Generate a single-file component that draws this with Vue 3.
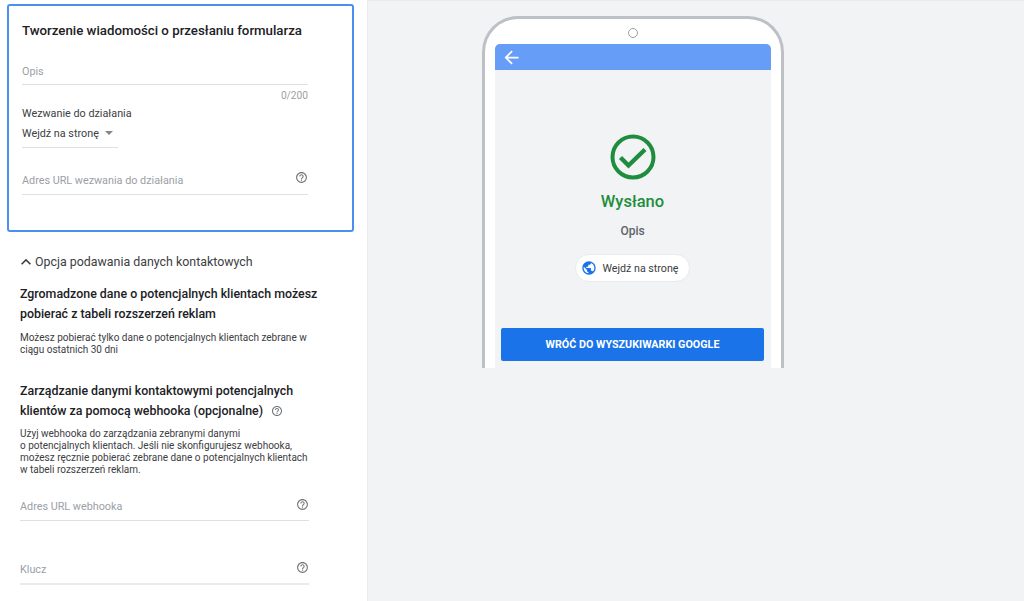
<script setup>
const helpPath = 'M11 18h2v-2h-2v2zm1-16C6.48 2 2 6.48 2 12s4.48 10 10 10 10-4.48 10-10S17.52 2 12 2zm0 18c-4.41 0-8-3.59-8-8s3.59-8 8-8 8 3.59 8 8-3.59 8-8 8zm0-14c-2.21 0-4 1.79-4 4h2c0-1.1.9-2 2-2s2 .9 2 2c0 2-3 1.75-3 5h2c0-2.25 3-2.5 3-5 0-2.21-1.79-4-4-4z'
</script>

<template>
  <div class="page">
    <aside class="panel">
      <section class="card">
        <h2 class="card-title">Tworzenie wiadomości o przesłaniu formularza</h2>
        <div class="field opis-field">
          <span class="placeholder">Opis</span>
        </div>
        <div class="counter">0/200</div>
        <div class="cta-label">Wezwanie do działania</div>
        <div class="select">
          <span>Wejdź na stronę</span>
          <i class="caret"></i>
        </div>
        <div class="field url-field">
          <span class="placeholder">Adres URL wezwania do działania</span>
          <svg class="help" viewBox="0 0 24 24"><path :d="helpPath" /></svg>
        </div>
      </section>

      <div class="contact">
        <div class="toggle">
          <svg class="chevron" viewBox="0 0 24 24"><path d="M7.41 15.41 12 10.83l4.59 4.58L18 14l-6-6-6 6z" /></svg>
          <span>Opcja podawania danych kontaktowych</span>
        </div>
        <h3 class="heading">Zgromadzone dane o potencjalnych klientach możesz<br />pobierać z tabeli rozszerzeń reklam</h3>
        <p class="note">Możesz pobierać tylko dane o potencjalnych klientach zebrane w<br />ciągu ostatnich 30 dni</p>
        <h3 class="heading second">
          Zarządzanie danymi kontaktowymi potencjalnych<br />
          klientów za pomocą webhooka (opcjonalne)
          <svg class="help inline" viewBox="0 0 24 24"><path :d="helpPath" /></svg>
        </h3>
        <p class="note">
          Użyj webhooka do zarządzania zebranymi danymi<br />
          o potencjalnych klientach. Jeśli nie skonfigurujesz webhooka,<br />
          możesz ręcznie pobierać zebrane dane o potencjalnych klientach<br />
          w tabeli rozszerzeń reklam.
        </p>
        <div class="field webhook-field">
          <span class="placeholder">Adres URL webhooka</span>
          <svg class="help" viewBox="0 0 24 24"><path :d="helpPath" /></svg>
        </div>
        <div class="field key-field">
          <span class="placeholder">Klucz</span>
          <svg class="help" viewBox="0 0 24 24"><path :d="helpPath" /></svg>
        </div>
      </div>
    </aside>

    <main class="preview">
      <div class="phone">
        <div class="camera"></div>
        <div class="screen">
          <div class="appbar">
            <svg class="back" viewBox="0 0 24 24"><path d="M20 11H7.83l5.59-5.59L12 4l-8 8 8 8 1.41-1.41L7.83 13H20v-2z" /></svg>
          </div>
          <div class="content">
            <svg class="check" viewBox="0 0 46 46">
              <circle cx="23" cy="23" r="20.5" fill="none" stroke="#1e8e3e" stroke-width="4" />
              <path d="M10.5 23.5 18.5 31.5 35 15.5" fill="none" stroke="#1e8e3e" stroke-width="4.4" />
            </svg>
            <div class="sent">Wysłano</div>
            <div class="desc">Opis</div>
            <div class="chip">
              <svg class="globe" viewBox="0 0 24 24"><path d="M12 2C6.48 2 2 6.48 2 12s4.48 10 10 10 10-4.48 10-10S17.52 2 12 2zm-1 17.93c-3.95-.49-7-3.85-7-7.93 0-.62.08-1.21.21-1.79L9 15v1c0 1.1.9 2 2 2v1.93zm6.9-2.54c-.26-.81-1-1.39-1.9-1.39h-1v-3c0-.55-.45-1-1-1H8v-2h2c.55 0 1-.45 1-1V7h2c1.1 0 2-.9 2-2v-.41c2.93 1.19 5 4.06 5 7.41 0 2.08-.8 3.97-2.1 5.39z" /></svg>
              <span>Wejdź na stronę</span>
            </div>
            <div class="return-btn">WRÓĆ DO WYSZUKIWARKI GOOGLE</div>
          </div>
        </div>
      </div>
    </main>
  </div>
</template>

<style>
html, body {
  margin: 0;
  height: 100%;
  overflow: hidden;
}
</style>

<style scoped>
.page {
  display: flex;
  width: 1024px;
  height: 601px;
  overflow: hidden;
  font-family: Roboto, "Liberation Sans", sans-serif;
  color: #202124;
  background: #f1f3f4;
}

.panel {
  flex: none;
  box-sizing: border-box;
  width: 368px;
  height: 601px;
  padding: 4px 0 0 7px;
  background: #fff;
  border-right: 1px solid #e8eaed;
}

.card {
  box-sizing: border-box;
  width: 347px;
  height: 228px;
  padding: 15px 44px 0 13px;
  border: 2px solid #4a90ec;
  border-radius: 3px;
}

.card-title {
  margin: 0;
  font-size: 13.25px;
  line-height: 20px;
  font-weight: 500;
  white-space: nowrap;
}

.field {
  position: relative;
  border-bottom: 1px solid #e0e0e0;
}

.placeholder {
  display: block;
  font-size: 10.8px;
  line-height: 16px;
  color: #9aa0a6;
}

.help {
  width: 13px;
  height: 13px;
  fill: #6f7377;
}

.field .help {
  position: absolute;
  right: 0;
  top: 0;
}

.opis-field {
  margin-top: 22px;
  height: 20px;
  padding-top: 1px;
}

.counter {
  margin-top: 5px;
  font-size: 10.2px;
  line-height: 12px;
  color: #9aa0a6;
  text-align: right;
}

.cta-label {
  margin-top: 4px;
  font-size: 10.8px;
  line-height: 16px;
  color: #3c4043;
}

.select {
  display: flex;
  align-items: center;
  gap: 6px;
  box-sizing: border-box;
  width: 96px;
  height: 24px;
  margin-top: 2px;
  padding-bottom: 5px;
  font-size: 10.8px;
  white-space: nowrap;
  border-bottom: 1px solid #e0e0e0;
  color: #3c4043;
}

.caret {
  width: 0;
  height: 0;
  border-left: 4px solid transparent;
  border-right: 4px solid transparent;
  border-top: 4px solid #80868b;
}

.url-field {
  margin-top: 24px;
  height: 21px;
  padding-top: 1px;
}

.url-field .help {
  top: -1px;
}

.contact {
  width: 300px;
  padding: 21px 0 0 13px;
}

.toggle {
  display: flex;
  align-items: center;
  gap: 0;
  height: 18px;
  margin-left: -4px;
  font-size: 12.4px;
  line-height: 18px;
  color: #3c4043;
  white-space: nowrap;
}

.chevron {
  flex: none;
  width: 20px;
  height: 20px;
  margin-right: -1px;
  fill: #3c4043;
}

.heading {
  margin: 13px 0 0;
  font-size: 12.4px;
  line-height: 20px;
  font-weight: 500;
  color: #202124;
  white-space: nowrap;
}

.heading.second {
  margin-top: 25px;
}

.help.inline {
  width: 12px;
  height: 12px;
  margin-left: 5px;
  vertical-align: -2px;
}

.note {
  margin: 8px 0 0;
  font-size: 10px;
  line-height: 12px;
  color: #3c4043;
  white-space: nowrap;
}

.heading.second + .note {
  margin-top: 7px;
}

.webhook-field {
  width: 289px;
  height: 22px;
  margin-top: 22px;
}

.webhook-field .placeholder,
.key-field .placeholder {
  padding-top: 1px;
}

.key-field {
  width: 289px;
  height: 22px;
  margin-top: 40px;
  border-bottom-width: 2px;
  border-bottom-color: #e8eaed;
}

.preview {
  flex: 1;
  min-width: 0;
  padding: 15px 0 0 114px;
  border-top: 1px solid #e8eaed;
}

.phone {
  box-sizing: border-box;
  width: 302px;
  height: 352px;
  padding-top: 9px;
  background: #fff;
  border: 3.5px solid #bdc1c6;
  border-bottom: 0;
  border-radius: 36px 36px 0 0;
}

.camera {
  box-sizing: border-box;
  width: 10px;
  height: 10px;
  margin: 0 auto 6px;
  border: 1px solid #9aa0a6;
  border-radius: 50%;
}

.screen {
  display: flex;
  flex-direction: column;
  width: 276px;
  height: 324px;
  margin-left: 9.5px;
  background: #f1f3f4;
  border-radius: 5px 5px 0 0;
  overflow: hidden;
}

.appbar {
  display: flex;
  align-items: center;
  flex: none;
  height: 26px;
  padding-left: 6px;
  background: #669df6;
}

.back {
  display: block;
  width: 21px;
  height: 21px;
  fill: #fff;
}

.content {
  display: flex;
  flex-direction: column;
  align-items: center;
  padding-top: 64px;
}

.check {
  width: 46px;
  height: 46px;
}

.sent {
  margin-top: 10px;
  font-size: 16.5px;
  line-height: 24px;
  font-weight: 500;
  color: #1e8e3e;
}

.desc {
  margin-top: 9px;
  font-size: 12px;
  line-height: 16px;
  font-weight: 500;
  color: #5f6368;
}

.chip {
  display: flex;
  align-items: center;
  gap: 5px;
  box-sizing: border-box;
  height: 28px;
  margin-top: 15px;
  padding: 0 10px 0 5px;
  font-size: 10.7px;
  color: #3c4043;
  background: #fff;
  border: 1px solid #e8eaed;
  border-radius: 14px;
  white-space: nowrap;
}

.globe {
  flex: none;
  width: 16px;
  height: 16px;
  fill: #1a73e8;
}

.return-btn {
  box-sizing: border-box;
  width: 263px;
  height: 33px;
  margin-top: 46px;
  font-size: 10.75px;
  line-height: 33px;
  font-weight: 700;
  text-align: center;
  color: #fff;
  background: #1a73e8;
  border-radius: 2px;
}
</style>
